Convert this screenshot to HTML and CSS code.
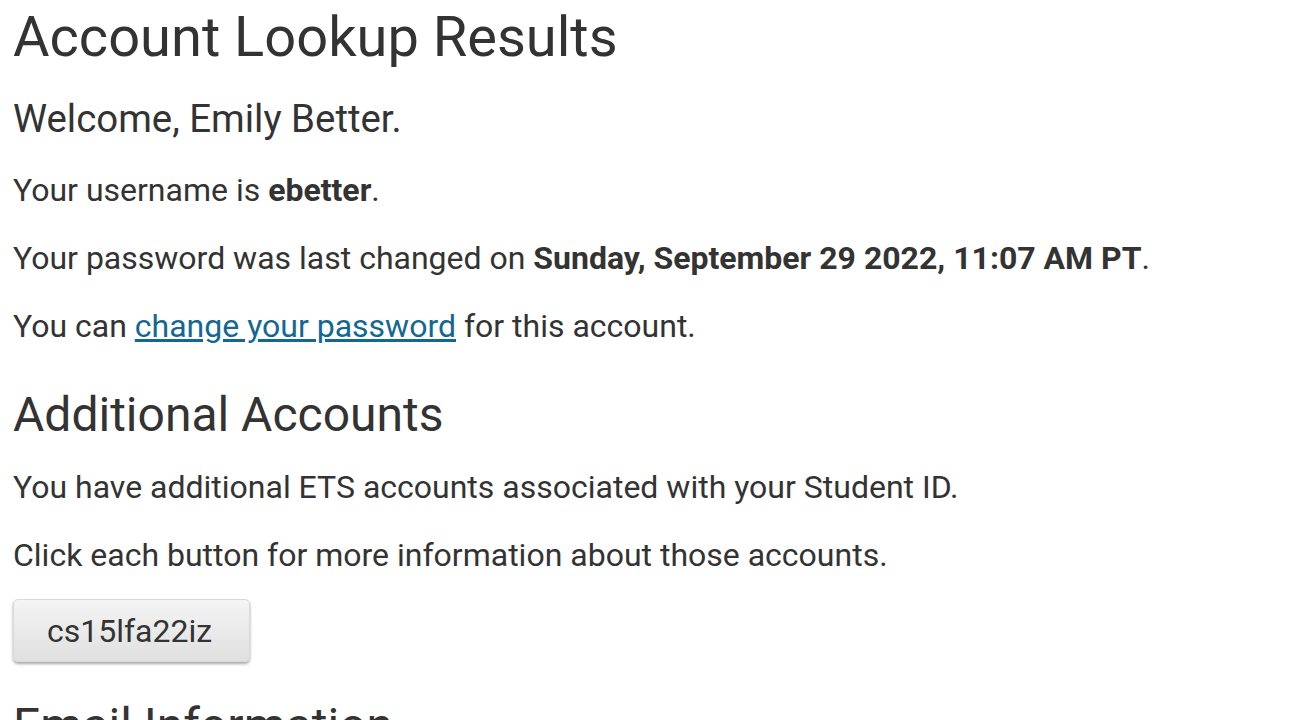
FILE: index.html
```html
<!DOCTYPE html>
<html lang="en">
<head>
<meta charset="utf-8">
<title>Account Lookup Results</title>
<link rel="stylesheet" href="styles.css">
</head>
<body>
<main class="page">
  <h1 class="title">Account Lookup Results</h1>
  <h3 class="welcome">Welcome, Emily Better.</h3>
  <p class="text">Your username is <strong>ebetter</strong>.</p>
  <p class="text">Your password was last changed on <strong>Sunday, September 29 2022, 11:07 AM PT</strong>.</p>
  <p class="text">You can <a class="link" href="#">change your password</a> for this account.</p>
  <h2 class="section">Additional Accounts</h2>
  <p class="text">You have additional ETS accounts associated with your Student ID.</p>
  <p class="text">Click each button for more information about those accounts.</p>
  <div class="buttons">
    <button class="acct-btn" type="button">cs15lfa22iz</button>
  </div>
  <h2 class="section section-next">Email Information</h2>
</main>
</body>
</html>
```
FILE: styles.css
```css
html, body {
  margin: 0;
  padding: 0;
  background: #ffffff;
}
body {
  font-family: Roboto, "Liberation Sans", sans-serif;
  color: #333333;
}
.page {
  padding: 6px 12px 0 13px;
}
.title {
  font-size: 56px;
  line-height: 62px;
  font-weight: 400;
  margin: 0;
}
.welcome {
  font-size: 38.4px;
  line-height: 44px;
  font-weight: 400;
  margin: 29px 0 0 0;
}
.text {
  font-size: 32px;
  line-height: 44px;
  margin: 24px 0 0 0;
}
.welcome + .text {
  margin-top: 27px;
}
.text strong {
  font-weight: 700;
}
.link {
  color: #136792;
  text-decoration: underline;
}
.section {
  font-size: 48px;
  line-height: 54px;
  font-weight: 400;
  margin: 40px 0 0 0;
}
.section + .text {
  margin-top: 23px;
}
.buttons {
  margin-top: 22px;
  display: flex;
}
.acct-btn {
  font-family: Roboto, "Liberation Sans", sans-serif;
  font-size: 32px;
  color: #333333;
  width: 237px;
  height: 63px;
  padding: 0 4px 0 0;
  border: 1px solid #dadada;
  border-radius: 5px;
  background: linear-gradient(#f4f4f4, #e0e0e0);
  box-shadow: 0 2px 3px rgba(0, 0, 0, 0.35);
}
.section-next {
  margin-top: 37px;
}
```
